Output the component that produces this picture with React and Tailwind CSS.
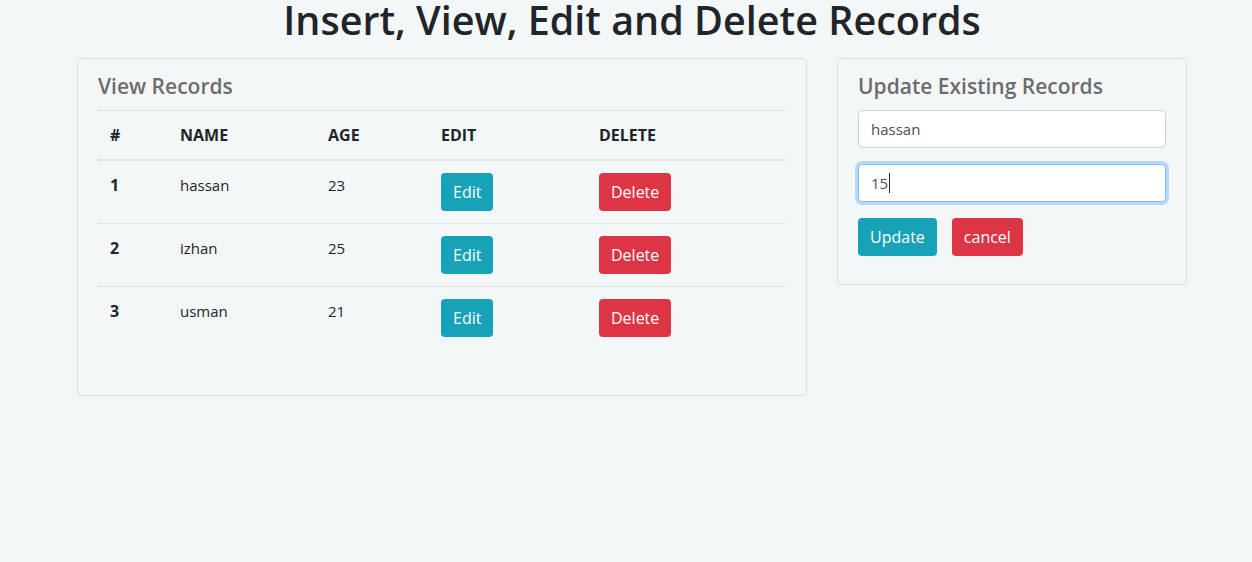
import React from "react";

const rows = [
  { id: 1, name: "hassan", age: 23 },
  { id: 2, name: "izhan", age: 25 },
  { id: 3, name: "usman", age: 21 },
];

export default function App() {
  return (
    <div
      className="min-h-[562px] w-full bg-[#f4f7f8] text-[#212529]"
      style={{ fontFamily: '"Open Sans", "Noto Sans", sans-serif' }}
    >
      <h1 className="text-center text-[39.5px] leading-[40px] font-semibold pl-[12px] m-0">
        Insert, View, Edit and Delete Records
      </h1>
      <div className="flex items-start gap-[30px] pl-[77px] mt-[18px]">
        <div className="w-[730px] h-[338px] border border-[#dcdfe2] rounded-[4px] px-[20px] pt-[13px]">
          <h4 className="text-[21px] leading-[28px] font-semibold text-[#6c6b6e] m-0 mb-[10px]">View Records</h4>
          <table className="w-[688px] border-collapse text-[16px]">
            <thead>
              <tr className="border-t border-[#dee2e6] border-b-2">
                <th className="w-[70px] text-left p-[12px] leading-[24px] font-bold">#</th>
                <th className="w-[148px] text-left p-[12px] leading-[24px] font-bold">NAME</th>
                <th className="w-[113px] text-left p-[12px] leading-[24px] font-bold">AGE</th>
                <th className="w-[158px] text-left p-[12px] leading-[24px] font-bold">EDIT</th>
                <th className="text-left p-[12px] leading-[24px] font-bold">DELETE</th>
              </tr>
            </thead>
            <tbody>
              {rows.map((r, i) => (
                <tr key={r.id} className={i > 0 ? "border-t border-[#dee2e6]" : ""}>
                  <td className="align-top p-[12px] leading-[24px] font-bold">{r.id}</td>
                  <td className="align-top p-[12px] leading-[24px] text-[15px]">{r.name}</td>
                  <td className="align-top p-[12px] leading-[24px] text-[15px]">{r.age}</td>
                  <td className="align-top p-[12px]">
                    <button className="h-[38px] px-[12px] rounded-[4px] bg-[#17a2b8] text-white text-[16px] leading-[24px]">
                      Edit
                    </button>
                  </td>
                  <td className="align-top p-[12px]">
                    <button className="h-[38px] px-[12px] rounded-[4px] bg-[#dc3545] text-white text-[16px] leading-[24px]">
                      Delete
                    </button>
                  </td>
                </tr>
              ))}
            </tbody>
          </table>
        </div>
        <div className="w-[350px] h-[227px] border border-[#dcdfe2] rounded-[4px] px-[20px] pt-[13px]">
          <h4 className="text-[21px] leading-[28px] font-semibold text-[#6c6b6e] m-0 mb-[10px]">Update Existing Records</h4>
          <div className="w-[308px] h-[38px] bg-white border border-[#ced4da] rounded-[4px] px-[12px] flex items-center text-[15px] text-[#495057]">
            hassan
          </div>
          <div className="mt-[16px] w-[308px] h-[38px] bg-white border border-[#80bdff] rounded-[4px] px-[12px] flex items-center text-[15px] text-[#495057] shadow-[0_0_0_3px_rgba(0,123,255,0.25)]">
            15<span className="inline-block w-px h-[20px] bg-[#222] ml-px" />
          </div>
          <div className="mt-[16px] flex gap-[15px]">
            <button className="h-[38px] px-[12px] rounded-[4px] bg-[#17a2b8] text-white text-[16px] leading-[24px]">
              Update
            </button>
            <button className="h-[38px] px-[12px] rounded-[4px] bg-[#dc3545] text-white text-[16px] leading-[24px]">
              cancel
            </button>
          </div>
        </div>
      </div>
    </div>
  );
}
